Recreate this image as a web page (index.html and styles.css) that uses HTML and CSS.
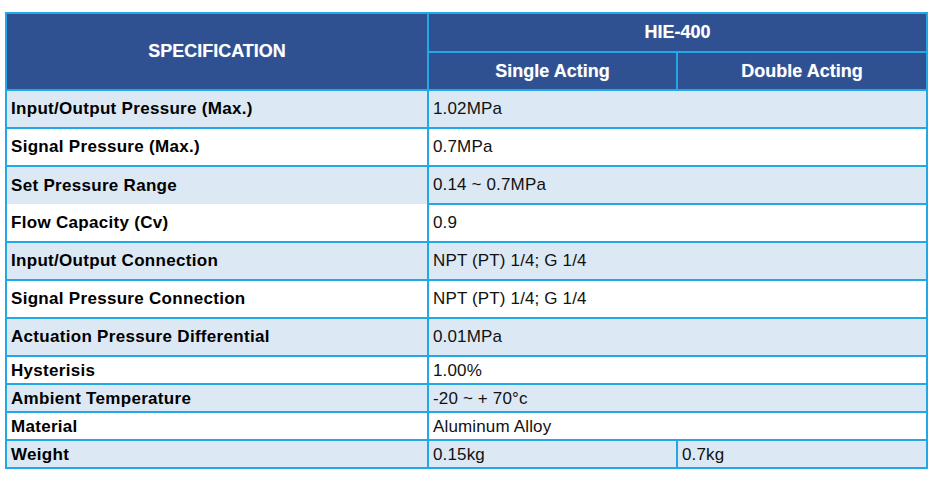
FILE: index.html
```html
<!DOCTYPE html>
<html>
<head>
<meta charset="utf-8">
<link rel="stylesheet" href="styles.css">
</head>
<body>
<table class="spec">
  <colgroup>
    <col class="c-label">
    <col class="c-val">
    <col class="c-val2">
  </colgroup>
  <thead>
    <tr class="h1">
      <th rowspan="2" class="h-spec">SPECIFICATION</th>
      <th colspan="2">HIE-400</th>
    </tr>
    <tr class="h2">
      <th>Single Acting</th>
      <th>Double Acting</th>
    </tr>
  </thead>
  <tbody>
    <tr class="tall alt"><td class="lbl">Input/Output Pressure (Max.)</td><td colspan="2">1.02MPa</td></tr>
    <tr class="tall"><td class="lbl">Signal Pressure (Max.)</td><td colspan="2">0.7MPa</td></tr>
    <tr class="tall alt"><td class="lbl nobottom">Set Pressure Range</td><td colspan="2">0.14 ~ 0.7MPa</td></tr>
    <tr class="tall"><td class="lbl">Flow Capacity (Cv)</td><td colspan="2">0.9</td></tr>
    <tr class="tall alt"><td class="lbl">Input/Output Connection</td><td colspan="2">NPT (PT) 1/4; G 1/4</td></tr>
    <tr class="tall"><td class="lbl">Signal Pressure Connection</td><td colspan="2">NPT (PT) 1/4; G 1/4</td></tr>
    <tr class="tall alt"><td class="lbl">Actuation Pressure Differential</td><td colspan="2">0.01MPa</td></tr>
    <tr class="short"><td class="lbl">Hysterisis</td><td colspan="2">1.00%</td></tr>
    <tr class="short alt"><td class="lbl">Ambient Temperature</td><td colspan="2">-20 ~ + 70°c</td></tr>
    <tr class="short"><td class="lbl">Material</td><td colspan="2">Aluminum Alloy</td></tr>
    <tr class="short alt"><td class="lbl">Weight</td><td>0.15kg</td><td>0.7kg</td></tr>
  </tbody>
</table>
</body>
</html>
```
FILE: styles.css
```css
html, body {
  margin: 0;
  padding: 0;
  background: #ffffff;
}
body {
  padding: 12px 0 0 5px;
  font-family: "Liberation Sans", Arial, sans-serif;
}
.spec {
  border-collapse: collapse;
  width: 921px;
  table-layout: fixed;
  font-size: 17px;
  color: #111111;
}
.c-label { width: 422px; }
.c-val { width: 249px; }
.c-val2 { width: 250px; }

.spec th, .spec td {
  border: 2px solid #22a8e6;
  padding: 0 0 0 4px;
  text-align: left;
  vertical-align: middle;
  white-space: nowrap;
  overflow: hidden;
}
.spec td { letter-spacing: 0.15px; }
.spec th {
  background: #2f5192;
  color: #ffffff;
  font-size: 18px;
  font-weight: bold;
  text-align: center;
  padding: 0;
  text-shadow: 0 0 1px rgba(255,255,255,0.4);
}
.h1 { height: 39px; }
.h2 { height: 38px; }
.tall { height: 38px; }
.short { height: 28px; }
.short td { padding-top: 2px; }
.alt td { background: #dce9f5; }
.spec td.lbl {
  font-weight: bold;
  color: #000000;
  letter-spacing: 0.3px;
}
.spec td.nobottom { border-bottom-style: hidden; }
```
